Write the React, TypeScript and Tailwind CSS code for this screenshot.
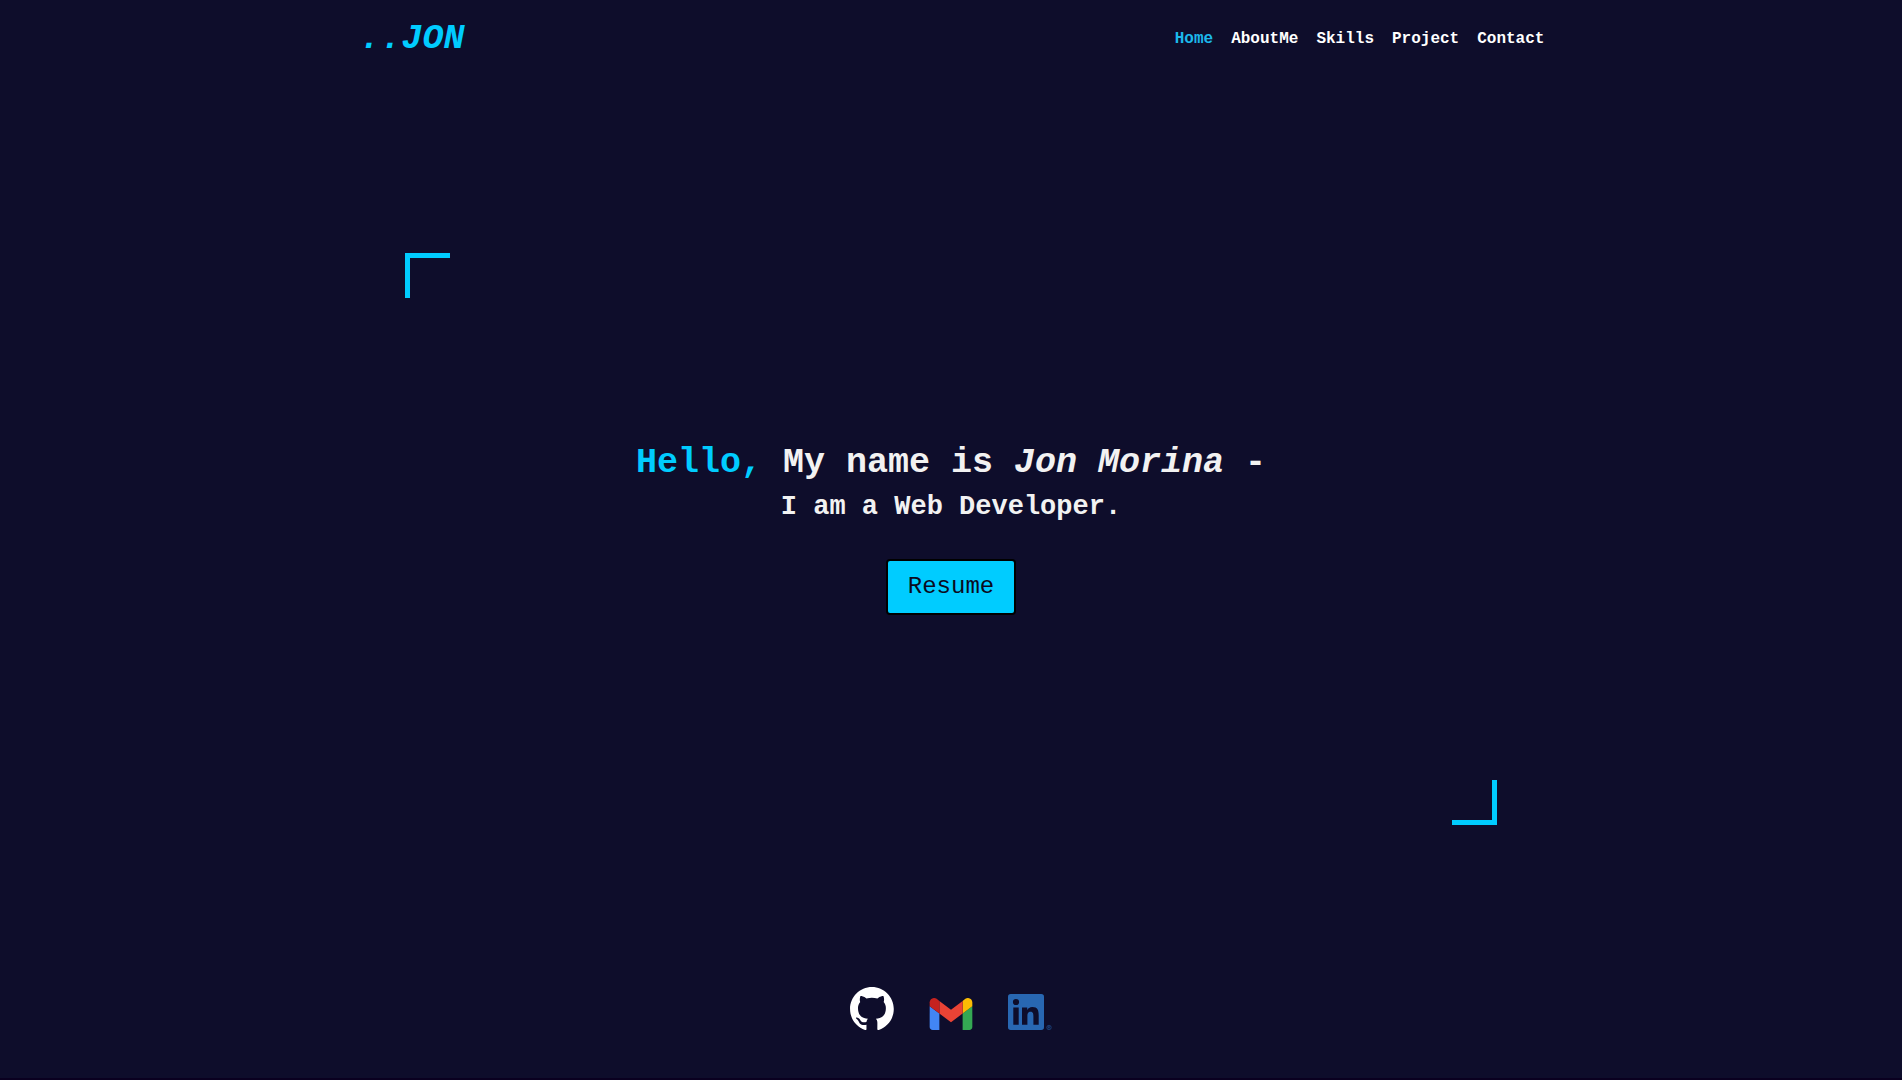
const links = ["Home", "AboutMe", "Skills", "Project", "Contact"];

function GithubIcon() {
  return (
    <svg viewBox="0 0 98 96" className="h-[43px] w-11" fill="#fff" aria-hidden="true">
      <path
        fillRule="evenodd"
        clipRule="evenodd"
        d="M48.854 0C21.839 0 0 22 0 49.217c0 21.756 13.993 40.172 33.405 46.69 2.427.49 3.316-1.059 3.316-2.362 0-1.141-.08-5.052-.08-9.127-13.59 2.934-16.42-5.867-16.42-5.867-2.184-5.704-5.42-7.17-5.42-7.17-4.448-3.015.324-3.015.324-3.015 4.934.326 7.523 5.052 7.523 5.052 4.367 7.496 11.404 5.378 14.235 4.074.404-3.178 1.699-5.378 3.074-6.6-10.839-1.141-22.243-5.378-22.243-24.283 0-5.378 1.94-9.778 5.014-13.2-.485-1.222-2.184-6.275.486-13.038 0 0 4.125-1.304 13.426 5.052a46.97 46.97 0 0 1 12.214-1.63c4.125 0 8.33.571 12.213 1.63 9.302-6.356 13.427-5.052 13.427-5.052 2.67 6.763.97 11.816.485 13.038 3.155 3.422 5.015 7.822 5.015 13.2 0 18.905-11.404 23.06-22.324 24.283 1.78 1.548 3.316 4.481 3.316 9.126 0 6.6-.08 11.897-.08 13.526 0 1.304.89 2.853 3.316 2.364 19.412-6.52 33.405-24.935 33.405-46.691C97.707 22 75.788 0 48.854 0z"
      />
    </svg>
  );
}

function GmailIcon() {
  return (
    <svg viewBox="52 42 88 66" className="h-8 w-11" aria-hidden="true">
      <path fill="#4285f4" d="M58 108h14V74L52 59v43c0 3.32 2.69 6 6 6" />
      <path fill="#34a853" d="M120 108h14c3.32 0 6-2.69 6-6V59l-20 15" />
      <path fill="#fbbc04" d="M120 48v26l20-15v-8c0-7.42-8.47-11.65-14.4-7.2" />
      <path fill="#ea4335" d="M72 74V48l24 18 24-18v26L96 92" />
      <path fill="#c5221f" d="M52 51v8l20 15V48l-5.6-4.2c-5.94-4.45-14.4-.22-14.4 7.2" />
    </svg>
  );
}

function LinkedinIcon() {
  return (
    <svg viewBox="0 0 44 36" className="h-9 w-11" aria-hidden="true">
      <path
        fill="#2867b2"
        fillRule="evenodd"
        d="M2.7 0h30.6A2.7 2.7 0 0 1 36 2.700v30.600a2.700 2.700 0 0 1-2.700 2.700H2.700A2.700 2.700 0 0 1 0 33.300V2.700A2.700 2.700 0 0 1 2.700 0zM5.300 13.500v17.200h5.400V13.500zM8 4.900a3.100 3.100 0 1 0 0 6.200a3.100 3.100 0 0 0 0-6.200zM14 13.500v17.200h5.400v-8.500c0-2.300.4-4.500 3.200-4.500 2.700 0 2.800 2.600 2.800 4.600v8.400h5.300v-9.400c0-4.700-1-8.200-6.400-8.200-2.600 0-4.300 1.400-5 2.800h-.1v-2.400z"
      />
      <circle cx="41" cy="33.500" r="2.200" fill="none" stroke="#2867b2" strokeWidth=".5" />
      <path d="M40.300 34.700v-2.400h.9a.6.600 0 0 1 0 1.300h-.9m.9 0l.7 1.100" fill="none" stroke="#2867b2" strokeWidth=".4" />
    </svg>
  );
}

export default function App() {
  return (
    <div className="flex min-h-screen flex-col border-b-2 border-[#0a0020] bg-[#0e0d2b] font-['Liberation_Mono',monospace] font-bold text-white">
      <header className="mx-auto flex h-[78px] w-[62.4%] items-center justify-between">
        <a href="#home" className="pl-0.5 text-[35px] leading-10 text-[#00ccff] italic">
          ..JON
        </a>
        <nav>
          <ul className="flex gap-[18px] text-base">
            {links.map((link) => (
              <li key={link}>
                <a href={`#${link.toLowerCase()}`} className={link === "Home" ? "text-[#1cb8ec]" : ""}>
                  {link}
                </a>
              </li>
            ))}
          </ul>
        </nav>
      </header>

      <main className="flex grow flex-col items-center">
        <section id="home" className="mt-[175px] flex w-[57.4%] flex-col">
          <span className="h-[45px] w-[45px] border-t-5 border-l-5 border-[#0cf]" />
          <div className="flex h-[482px] flex-col items-center pt-[141px] text-center text-[#f2f2f2]">
            <h1 className="text-[35px] leading-12">
              <span className="text-[#00ccff]">Hello,</span> My name is <em>Jon Morina</em> -
            </h1>
            <h2 className="text-[27px] leading-10">I am a Web Developer.</h2>
            <button
              type="button"
              className="mt-8 h-14 rounded-sm border-2 border-black bg-[#00ccff] px-5 text-2xl font-normal text-[#0b0b1e]"
            >
              Resume
            </button>
          </div>
          <span className="h-[45px] w-[45px] self-end border-r-5 border-b-5 border-[#0cf]" />
        </section>
      </main>

      <footer className="flex items-end justify-center gap-[35px] pb-12">
        <a href="https://github.com" aria-label="GitHub">
          <GithubIcon />
        </a>
        <a href="mailto:jon@example.com" aria-label="Email">
          <GmailIcon />
        </a>
        <a href="https://linkedin.com" aria-label="LinkedIn">
          <LinkedinIcon />
        </a>
      </footer>
    </div>
  );
}
